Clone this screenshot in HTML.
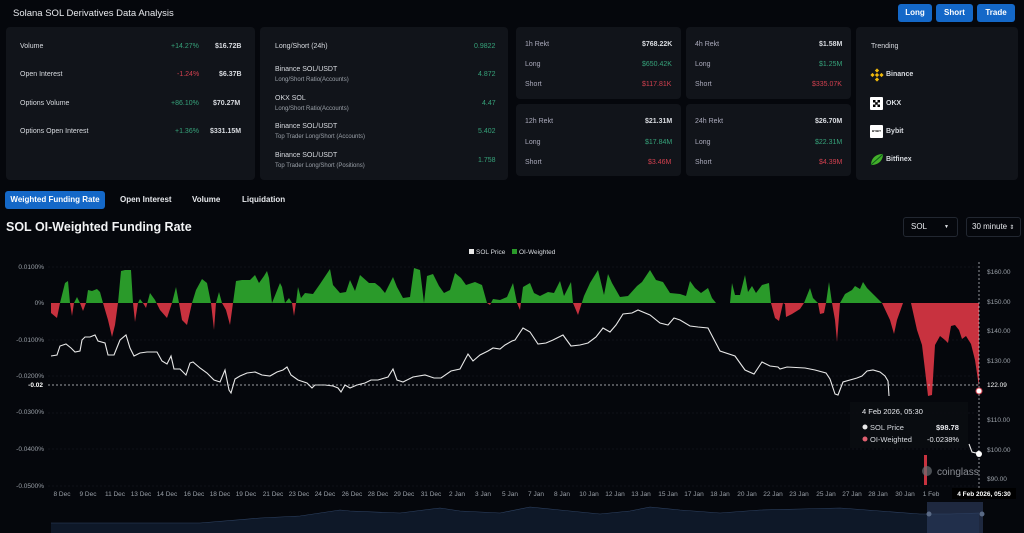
<!DOCTYPE html>
<html><head><meta charset="utf-8"><style>
*{margin:0;padding:0;box-sizing:border-box}
body{width:1024px;height:533px;background:#05070c;color:#e6e8ec;font-family:"Liberation Sans",sans-serif;position:relative;overflow:hidden}
.a{position:absolute;white-space:nowrap}
.card{position:absolute;background:#11141a;border-radius:4px}
.s{font-size:7px;color:#d8dbe0}
.sub{font-size:6px;color:#9aa0a8}
.g{color:#36a27a}.r{color:#d2404f}
.b{font-weight:bold}
.btn{position:absolute;background:#1468c8;border-radius:3px;color:#fff;font-size:8px;font-weight:bold;text-align:center;line-height:18px;top:4px;height:18px}
.ax{font-size:6.5px;fill:#9aa0a8;font-family:"Liberation Sans",sans-serif}
</style></head><body>
<div class="a" style="left:13px;top:8px;font-size:9.5px;color:#e8eaee">Solana SOL Derivatives Data Analysis</div>
<div class="btn" style="left:898px;width:34px">Long</div>
<div class="btn" style="left:936px;width:37px">Short</div>
<div class="btn" style="left:977px;width:38px">Trade</div>

<div class="card" style="left:6px;top:27px;width:249px;height:153px"></div>
<div class="a s" style="left:20px;top:43px">Volume</div><div class="a s g" style="left:171px;top:43px">+14.27%</div><div class="a s b" style="left:215px;top:43px">$16.72B</div>
<div class="a s" style="left:20px;top:71px">Open Interest</div><div class="a s r" style="left:177px;top:71px">-1.24%</div><div class="a s b" style="left:219px;top:71px">$6.37B</div>
<div class="a s" style="left:20px;top:100px">Options Volume</div><div class="a s g" style="left:171px;top:100px">+86.10%</div><div class="a s b" style="left:213px;top:100px">$70.27M</div>
<div class="a s" style="left:20px;top:128px">Options Open Interest</div><div class="a s g" style="left:175px;top:128px">+1.36%</div><div class="a s b" style="left:210px;top:128px">$331.15M</div>

<div class="card" style="left:260px;top:27px;width:248px;height:153px"></div>
<div class="a s" style="left:275px;top:43px">Long/Short (24h)</div><div class="a s g" style="left:474px;top:43px">0.9822</div>
<div class="a s" style="left:275px;top:66px">Binance SOL/USDT</div><div class="a sub" style="left:275px;top:77px">Long/Short Ratio(Accounts)</div><div class="a s g" style="left:478px;top:71px">4.872</div>
<div class="a s" style="left:275px;top:95px">OKX SOL</div><div class="a sub" style="left:275px;top:106px">Long/Short Ratio(Accounts)</div><div class="a s g" style="left:482px;top:100px">4.47</div>
<div class="a s" style="left:275px;top:123px">Binance SOL/USDT</div><div class="a sub" style="left:275px;top:134px">Top Trader Long/Short (Accounts)</div><div class="a s g" style="left:478px;top:128px">5.402</div>
<div class="a s" style="left:275px;top:152px">Binance SOL/USDT</div><div class="a sub" style="left:275px;top:163px">Top Trader Long/Short (Positions)</div><div class="a s g" style="left:478px;top:157px">1.758</div>

<div class="card" style="left:516px;top:27px;width:165px;height:72px"></div>
<div class="a s" style="left:525px;top:41px;color:#aab">1h Rekt</div><div class="a s b" style="left:642px;top:41px">$768.22K</div>
<div class="a s" style="left:525px;top:61px;color:#aab">Long</div><div class="a s g" style="left:642px;top:61px">$650.42K</div>
<div class="a s" style="left:525px;top:81px;color:#aab">Short</div><div class="a s r" style="left:642px;top:81px">$117.81K</div>
<div class="card" style="left:686px;top:27px;width:165px;height:72px"></div>
<div class="a s" style="left:695px;top:41px;color:#aab">4h Rekt</div><div class="a s b" style="left:819px;top:41px">$1.58M</div>
<div class="a s" style="left:695px;top:61px;color:#aab">Long</div><div class="a s g" style="left:819px;top:61px">$1.25M</div>
<div class="a s" style="left:695px;top:81px;color:#aab">Short</div><div class="a s r" style="left:812px;top:81px">$335.07K</div>
<div class="card" style="left:516px;top:104px;width:165px;height:72px"></div>
<div class="a s" style="left:525px;top:118px;color:#aab">12h Rekt</div><div class="a s b" style="left:645px;top:118px">$21.31M</div>
<div class="a s" style="left:525px;top:139px;color:#aab">Long</div><div class="a s g" style="left:645px;top:139px">$17.84M</div>
<div class="a s" style="left:525px;top:159px;color:#aab">Short</div><div class="a s r" style="left:648px;top:159px">$3.46M</div>
<div class="card" style="left:686px;top:104px;width:165px;height:72px"></div>
<div class="a s" style="left:695px;top:118px;color:#aab">24h Rekt</div><div class="a s b" style="left:815px;top:118px">$26.70M</div>
<div class="a s" style="left:695px;top:139px;color:#aab">Long</div><div class="a s g" style="left:815px;top:139px">$22.31M</div>
<div class="a s" style="left:695px;top:159px;color:#aab">Short</div><div class="a s r" style="left:819px;top:159px">$4.39M</div>

<div class="card" style="left:856px;top:27px;width:162px;height:153px"></div>
<div class="a s" style="left:871px;top:43px">Trending</div>
<svg class="a" style="left:870px;top:68px" width="14" height="14" viewBox="0 0 14 14"><g fill="#f0b90b"><rect x="5.5" y="1" width="3" height="3" transform="rotate(45 7 2.5)"/><rect x="5.5" y="10" width="3" height="3" transform="rotate(45 7 11.5)"/><rect x="1" y="5.5" width="3" height="3" transform="rotate(45 2.5 7)"/><rect x="10" y="5.5" width="3" height="3" transform="rotate(45 11.5 7)"/><rect x="5.5" y="5.5" width="3" height="3" transform="rotate(45 7 7)"/></g></svg>
<div class="a s b" style="left:886px;top:71px">Binance</div>
<div class="a" style="left:870px;top:97px;width:13px;height:13px;background:#fff;border-radius:1px"><svg width="13" height="13"><g fill="#000"><rect x="3" y="3" width="2.5" height="2.5"/><rect x="7.5" y="3" width="2.5" height="2.5"/><rect x="5.2" y="5.2" width="2.5" height="2.5"/><rect x="3" y="7.5" width="2.5" height="2.5"/><rect x="7.5" y="7.5" width="2.5" height="2.5"/></g></svg></div>
<div class="a s b" style="left:886px;top:100px">OKX</div>
<div class="a" style="left:870px;top:125px;width:13px;height:13px;background:#fff;border-radius:1px;font-size:3px;color:#000;line-height:13px;text-align:center;font-weight:bold">BYBIT</div>
<div class="a s b" style="left:886px;top:128px">Bybit</div>
<svg class="a" style="left:870px;top:153px" width="14" height="13"><path d="M1 12C1 5 6 1 13 1C13 8 8 12 1 12Z" fill="#43b02a"/><path d="M1 12C5 8 9 5 13 1" stroke="#0e5e1a" stroke-width="1" fill="none"/></svg>
<div class="a s b" style="left:886px;top:156px">Bitfinex</div>

<div class="a" style="left:5px;top:191px;width:100px;height:18px;background:#1468c8;border-radius:3px;color:#fff;font-size:8px;font-weight:bold;text-align:center;line-height:18px">Weighted Funding Rate</div>
<div class="a b" style="left:120px;top:195px;font-size:8px">Open Interest</div>
<div class="a b" style="left:192px;top:195px;font-size:8px">Volume</div>
<div class="a b" style="left:242px;top:195px;font-size:8px">Liquidation</div>
<div class="a b" style="left:6px;top:220px;font-size:12.5px;color:#f2f3f5">SOL OI-Weighted Funding Rate</div>
<div class="a" style="left:903px;top:217px;width:55px;height:20px;border:1px solid #222731;border-radius:3px;font-size:8px;line-height:18px;padding-left:7px">SOL<span style="position:absolute;right:8px;font-size:5px">▼</span></div>
<div class="a" style="left:966px;top:217px;width:55px;height:20px;border:1px solid #222731;border-radius:3px;font-size:8px;line-height:18px;padding-left:5px">30 minute <span style="font-size:6px">⇕</span></div>

<svg class="a" style="left:0;top:0" width="1024" height="533">
<defs>
<clipPath id="up"><rect x="0" y="0" width="1024" height="303"/></clipPath>
<clipPath id="dn"><rect x="0" y="303" width="1024" height="230"/></clipPath>
<path id="fr" d="M51,303 L51,313 57,318 60,303 65,283 68,281 70,303 72,316 74,303 77,297 80,303 83,311 86,303 88,290 92,291 97,289 100,292 103,303 108,320 112,337 115,325 118,303 121,271 125,270 131,270 133,303 135,322 138,303 140,299 143,303 146,308 150,293 155,300 160,310 167,318 172,303 176,287 179,303 182,320 187,325 192,303 196,290 202,279 207,283 211,303 214,330 216,303 219,292 222,303 226,310 230,325 233,303 236,281 242,280 250,280 255,275 259,283 264,276 267,271 269,278 272,303 280,283 282,287 285,303 289,298 292,303 294,316 296,303 298,287 301,298 305,293 313,294 320,284 330,269 333,285 340,293 346,292 350,280 355,291 360,275 369,283 375,283 380,287 385,293 393,277 397,287 403,298 410,297 414,268 420,270 424,303 427,276 433,274 439,286 444,293 450,290 455,273 461,278 466,285 475,282 482,285 487,303 490,305 493,299 500,300 507,297 513,283 517,303 520,310 523,287 530,283 534,293 540,296 548,292 554,293 560,281 564,296 571,282 573,303 578,315 584,296 590,283 598,270 604,295 608,274 612,283 620,297 628,296 637,286 642,282 650,270 656,280 663,282 670,293 680,294 686,296 690,281 695,288 701,293 708,288 712,298 716,303 730,303 732,283 735,295 740,295 745,275 748,292 752,286 756,293 762,285 769,283 771,303 775,318 779,321 783,303 785,304 786,317 792,314 800,309 804,303 810,288 813,298 818,303 820,314 824,313 826,303 829,282 832,303 835,320 837,342 840,303 845,294 852,290 855,286 860,289 863,282 867,288 874,295 882,303 890,320 894,334 897,320 903,303 911,303 917,330 922,345 925,370 928,396 932,395 935,345 940,336 945,340 948,343 951,326 955,325 959,330 962,339 966,336 971,344 975,360 979,387 979,303 Z"/>
</defs>
<g stroke="#1a1e26" stroke-width="0.6" stroke-dasharray="2,2">
<line x1="48" y1="267" x2="979" y2="267"/><line x1="48" y1="340" x2="979" y2="340"/><line x1="48" y1="376" x2="979" y2="376"/><line x1="48" y1="413" x2="979" y2="413"/><line x1="48" y1="449" x2="979" y2="449"/><line x1="48" y1="486" x2="979" y2="486"/>
</g>
<use href="#fr" fill="#2a9a2a" clip-path="url(#up)"/>
<use href="#fr" fill="#c8323f" clip-path="url(#dn)"/>
<rect x="924" y="455" width="3" height="30" fill="#c8323f"/>
<polyline fill="none" stroke="#e8e8e8" stroke-width="1.1" points="51,356 57,355 60,346 66,344 71,348 75,352 80,351 82,340 85,337 90,337 95,335 98,341 105,343 108,355 114,355 120,340 126,335 130,348 134,356 140,353 147,352 157,352 162,361 167,364 171,356 174,369 180,369 186,375 190,363 193,362 200,368 207,373 214,380 220,382 225,370 229,390 231,393 235,379 240,376 247,373 255,372 262,375 270,376 277,372 283,370 287,367 291,375 298,380 307,383 312,388 315,385 325,385 333,386 338,388 341,392 345,385 350,388 357,385 365,383 371,380 378,380 388,377 393,369 397,380 403,382 413,377 425,375 434,378 441,378 451,371 460,369 468,354 473,361 480,355 488,351 493,348 500,349 505,345 512,341 515,340 523,328 530,332 538,344 546,343 553,340 563,335 571,346 580,345 588,343 596,337 603,328 610,332 616,325 623,314 632,313 638,310 650,315 660,323 668,325 674,318 680,320 690,326 698,327 708,328 720,351 735,356 745,370 754,374 760,365 762,362 770,366 778,367 780,369 787,367 805,368 815,370 826,373 830,379 835,394 838,395 843,382 857,378 862,376 867,371 873,370 880,372 885,376 888,381 889,396"/>
<polyline fill="none" stroke="#e8e8e8" stroke-width="1.1" points="969,444 972,452 976,453 979,451"/>
<line x1="48" y1="385" x2="979" y2="385" stroke="#cfd2d8" stroke-width="0.7" stroke-dasharray="2,2"/>
<line x1="979" y1="262" x2="979" y2="492" stroke="#cfd2d8" stroke-width="0.7" stroke-dasharray="2,2"/>
<rect x="850" y="402" width="118" height="46" fill="#0b0d12" opacity="0.85"/>
<text x="862" y="414" font-size="7.5" fill="#e8eaee" font-family="Liberation Sans">4 Feb 2026, 05:30</text>
<circle cx="865" cy="427" r="2.5" fill="#e8e8e8"/><text x="870" y="430" font-size="7.5" fill="#d8dbe0" font-family="Liberation Sans">SOL Price</text><text x="936" y="430" font-size="7.5" fill="#e8eaee" font-weight="bold" font-family="Liberation Sans">$98.78</text>
<circle cx="865" cy="439" r="2.5" fill="#e06070"/><text x="870" y="442" font-size="7.5" fill="#d8dbe0" font-family="Liberation Sans">OI-Weighted</text><text x="927" y="442" font-size="7.5" fill="#e8eaee" font-family="Liberation Sans">-0.0238%</text>
<text x="937" y="475" font-size="10" fill="#8a8d94" font-family="Liberation Sans">coinglass</text>
<circle cx="927" cy="471" r="5" fill="#6a6d74" opacity="0.7"/>
<circle cx="979" cy="391" r="3" fill="#fff" stroke="#d2404f" stroke-width="1"/>
<circle cx="979" cy="454" r="3" fill="#fff"/>
<g class="ax" text-anchor="end">
<text x="44" y="269">0.0100%</text><text x="44" y="305">0%</text><text x="44" y="342">-0.0100%</text><text x="44" y="378">-0.0200%</text><text x="44" y="414">-0.0300%</text><text x="44" y="451">-0.0400%</text><text x="44" y="488">-0.0500%</text>
</g>
<text x="43" y="387" font-size="6.5" fill="#fff" font-weight="bold" text-anchor="end" font-family="Liberation Sans">-0.02</text>
<g class="ax">
<text x="987" y="274">$160.00</text><text x="987" y="304">$150.00</text><text x="987" y="333">$140.00</text><text x="987" y="363">$130.00</text><text x="987" y="422">$110.00</text><text x="987" y="452">$100.00</text><text x="987" y="481">$90.00</text>
</g>
<text x="987" y="387" font-size="6.5" fill="#fff" font-family="Liberation Sans">122.09</text>
<g class="ax" text-anchor="middle">
<text x="62" y="496">8 Dec</text><text x="88" y="496">9 Dec</text><text x="115" y="496">11 Dec</text><text x="141" y="496">13 Dec</text><text x="167" y="496">14 Dec</text><text x="194" y="496">16 Dec</text><text x="220" y="496">18 Dec</text><text x="246" y="496">19 Dec</text><text x="273" y="496">21 Dec</text><text x="299" y="496">23 Dec</text><text x="325" y="496">24 Dec</text><text x="352" y="496">26 Dec</text><text x="378" y="496">28 Dec</text><text x="404" y="496">29 Dec</text><text x="431" y="496">31 Dec</text><text x="457" y="496">2 Jan</text><text x="483" y="496">3 Jan</text><text x="510" y="496">5 Jan</text><text x="536" y="496">7 Jan</text><text x="562" y="496">8 Jan</text><text x="589" y="496">10 Jan</text><text x="615" y="496">12 Jan</text><text x="641" y="496">13 Jan</text><text x="668" y="496">15 Jan</text><text x="694" y="496">17 Jan</text><text x="720" y="496">18 Jan</text><text x="747" y="496">20 Jan</text><text x="773" y="496">22 Jan</text><text x="799" y="496">23 Jan</text><text x="826" y="496">25 Jan</text><text x="852" y="496">27 Jan</text><text x="878" y="496">28 Jan</text><text x="905" y="496">30 Jan</text><text x="931" y="496">1 Feb</text>
</g>
<rect x="952" y="488" width="64" height="11" fill="#000"/>
<text x="984" y="496" font-size="6.5" fill="#fff" font-weight="bold" text-anchor="middle" font-family="Liberation Sans">4 Feb 2026, 05:30</text>
<path d="M51,533 L51,523 200,523 260,518 300,516 340,510 350,511 400,513 440,508 460,511 500,513 530,507 560,510 600,514 630,511 650,507 680,510 720,513 760,510 800,509 840,508 880,511 920,514 950,514 979,513 979,533Z" fill="#0e1828"/>
<path d="M51,523 200,523 260,518 300,516 340,510 350,511 400,513 440,508 460,511 500,513 530,507 560,510 600,514 630,511 650,507 680,510 720,513 760,510 800,509 840,508 880,511 920,514 950,514 979,513" fill="none" stroke="#2e4262" stroke-width="0.6"/>
<rect x="927" y="502" width="56" height="31" fill="#2e4062" opacity="0.6"/>
<circle cx="929" cy="514" r="2.5" fill="#5a6a85"/><circle cx="982" cy="514" r="2.5" fill="#5a6a85"/>
<rect x="469" y="249" width="5" height="5" fill="#e8e8e8"/><text x="476" y="254" font-size="6.5" fill="#d8dbe0" font-family="Liberation Sans">SOL Price</text>
<rect x="512" y="249" width="5" height="5" fill="#2a9a2a"/><text x="519" y="254" font-size="6.5" fill="#d8dbe0" font-family="Liberation Sans">OI-Weighted</text>
</svg>
</body></html>
